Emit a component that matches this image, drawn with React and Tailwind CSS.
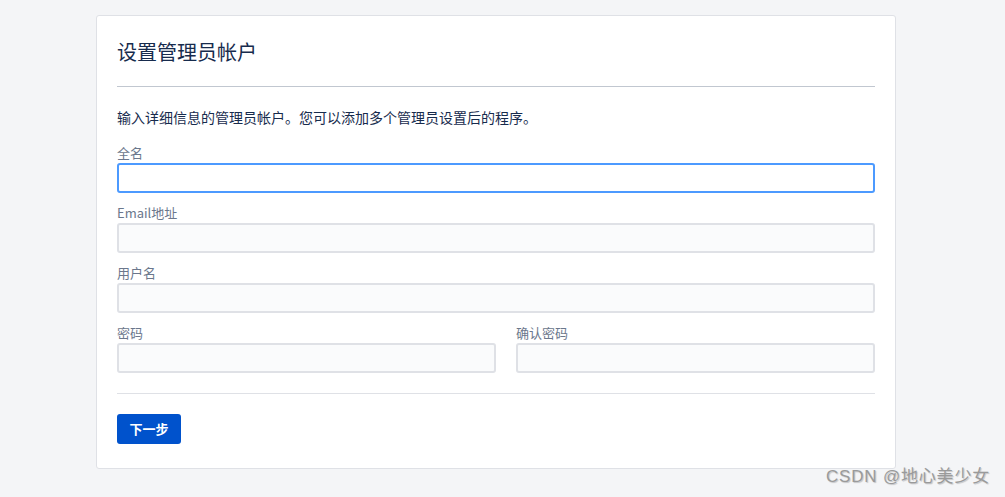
export default function App() {
  const font = { fontFamily: '"Noto Sans CJK SC", "Noto Sans", sans-serif' };
  const inputCls =
    "block w-full h-[30px] rounded-[3px] border-2 border-[#dfe1e6] bg-[#fafbfc] outline-none";
  const labelCls = "block text-[13px] leading-[20px] text-[#6b778c]";
  return (
    <div className="min-h-[497px] w-full bg-[#f4f5f7] relative" style={font}>
      <div className="pt-[15px] pl-[96px]">
        <div className="w-[800px] bg-white border border-[#dfe1e6] rounded-[3px] px-[20px] pt-[24px] pb-[24px]">
          <h1 className="text-[20px] leading-[24px] text-[#172b4d] font-normal">设置管理员帐户</h1>
          <div className="mt-[22px] h-px bg-[#c1c7d0]" />
          <p className="mt-[20px] text-[14px] leading-[20px] text-[#172b4d]">
            输入详细信息的管理员帐户。您可以添加多个管理员设置后的程序。
          </p>
          <div className="mt-[16px]">
            <label className={labelCls}>全名</label>
            <input className="block w-full h-[30px] rounded-[3px] border-2 border-[#4c9aff] bg-white outline-none" />
          </div>
          <div className="mt-[10px]">
            <label className={labelCls}>Email地址</label>
            <input className={inputCls} />
          </div>
          <div className="mt-[10px]">
            <label className={labelCls}>用户名</label>
            <input className={inputCls} />
          </div>
          <div className="mt-[10px] grid grid-cols-[379px_1fr] gap-[20px]">
            <div>
              <label className={labelCls}>密码</label>
              <input className={inputCls} />
            </div>
            <div>
              <label className={labelCls}>确认密码</label>
              <input className={inputCls} />
            </div>
          </div>
          <div className="mt-[20px] h-px bg-[#dfe1e6]" />
          <button className="mt-[20px] h-[30px] w-[64px] rounded-[3px] bg-[#0052cc] text-white text-[13px] font-bold">
            下一步
          </button>
        </div>
      </div>
      <div
        className="absolute right-[15px] top-[466px] text-[17px] leading-[22px] tracking-[0.8px] text-[#9a9a9a]"
        style={{ textShadow: "1px 1px 1px rgba(0,0,0,0.2)", fontFamily: '"Liberation Sans", "Noto Sans CJK SC", sans-serif' }}
      >
        CSDN @地心美少女
      </div>
    </div>
  );
}
